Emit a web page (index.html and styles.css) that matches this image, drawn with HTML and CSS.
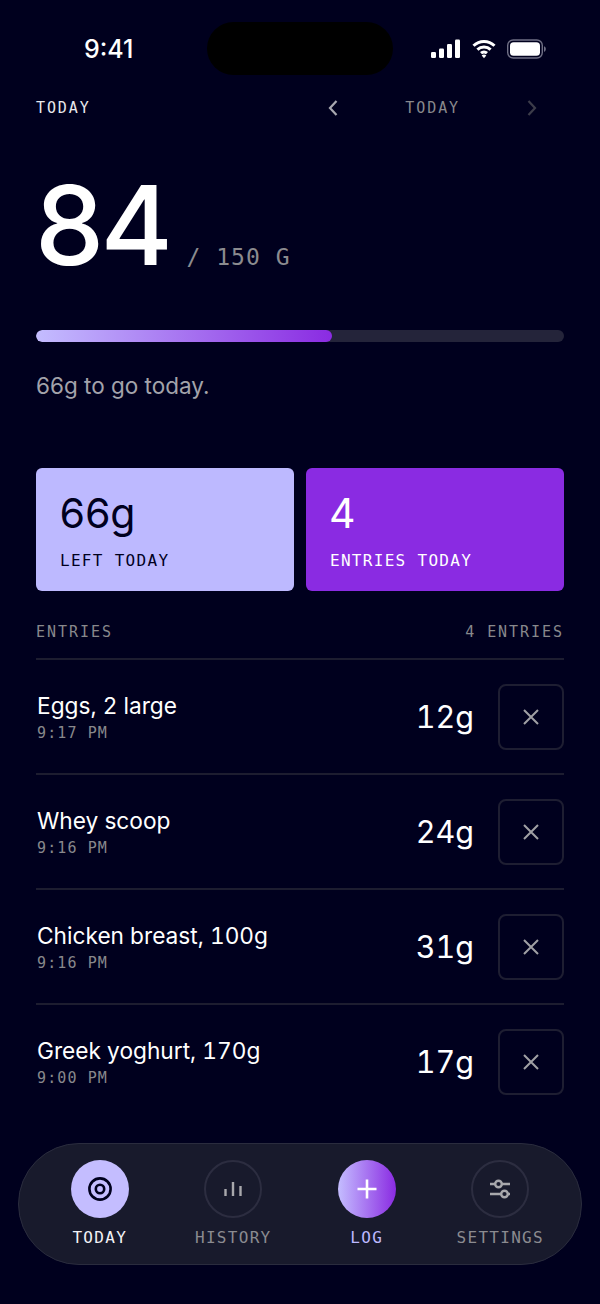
FILE: index.html
```html
<!DOCTYPE html>
<html lang="en">
<head>
<meta charset="utf-8">
<title>Today</title>
<link rel="stylesheet" href="styles.css">
</head>
<body>
<div class="screen">
  <div class="status">
    <span class="clock">9:41</span>
    <div class="island"></div>
    <div class="status-icons">
      <svg class="sig" width="30" height="20" viewBox="0 0 30 20"><rect x="0" y="13" width="5" height="6" rx="1.2"/><rect x="8" y="9.5" width="5" height="9.5" rx="1.2"/><rect x="16" y="5" width="5" height="14" rx="1.2"/><rect x="24" y="0.5" width="5" height="18.5" rx="1.2"/></svg>
      <svg class="wifi" width="26" height="20" viewBox="0 0 24 20"><path d="M1.5 6.8a15 15 0 0 1 21 0" /><path d="M5.4 10.7a9.5 9.5 0 0 1 13.2 0"/><path d="M9 14.2a4.5 4.5 0 0 1 6 0"/><path class="wifi-dot" d="M12 19.2l-2.3-2.6a3.4 3.4 0 0 1 4.6 0z"/></svg>
      <svg class="batt" width="40" height="20" viewBox="0 0 40 20"><rect x="0.7" y="1" width="34.6" height="18" rx="5.5" class="batt-shell"/><rect x="3" y="3.2" width="30" height="13.6" rx="3.6" class="batt-fill"/><path d="M37 7.2c1.2.4 1.8 1.4 1.8 2.8s-.6 2.4-1.8 2.8z" class="batt-cap"/></svg>
    </div>
  </div>

  <header class="topbar">
    <span class="mono top-title">TODAY</span>
    <div class="date-nav">
      <svg class="chev" width="12" height="18" viewBox="0 0 12 18"><path d="M9.5 2L3 9l6.5 7"/></svg>
      <span class="mono date-label">TODAY</span>
      <svg class="chev chev-off" width="12" height="18" viewBox="0 0 12 18"><path d="M2.5 2L9 9l-6.5 7"/></svg>
    </div>
  </header>

  <section class="total">
    <span class="big">84</span>
    <span class="mono goal">/ 150 G</span>
  </section>

  <div class="track"><div class="fill" style="width:56%"></div></div>
  <p class="togo">66g to go today.</p>

  <div class="cards">
    <div class="card card-light">
      <div class="card-num">66g</div>
      <div class="mono card-label">LEFT TODAY</div>
    </div>
    <div class="card card-purple">
      <div class="card-num">4</div>
      <div class="mono card-label">ENTRIES TODAY</div>
    </div>
  </div>

  <div class="mono list-head"><span>ENTRIES</span><span>4 ENTRIES</span></div>

  <ul class="entries">
    <li class="entry">
      <div class="entry-main"><div class="entry-name">Eggs, 2 large</div><div class="mono entry-time">9:17 PM</div></div>
      <div class="entry-g">12g</div>
      <button class="del"><svg width="18" height="18" viewBox="0 0 18 18"><path d="M2 2l14 14M16 2L2 16"/></svg></button>
    </li>
    <li class="entry">
      <div class="entry-main"><div class="entry-name">Whey scoop</div><div class="mono entry-time">9:16 PM</div></div>
      <div class="entry-g">24g</div>
      <button class="del"><svg width="18" height="18" viewBox="0 0 18 18"><path d="M2 2l14 14M16 2L2 16"/></svg></button>
    </li>
    <li class="entry">
      <div class="entry-main"><div class="entry-name">Chicken breast, 100g</div><div class="mono entry-time">9:16 PM</div></div>
      <div class="entry-g">31g</div>
      <button class="del"><svg width="18" height="18" viewBox="0 0 18 18"><path d="M2 2l14 14M16 2L2 16"/></svg></button>
    </li>
    <li class="entry">
      <div class="entry-main"><div class="entry-name">Greek yoghurt, 170g</div><div class="mono entry-time">9:00 PM</div></div>
      <div class="entry-g">17g</div>
      <button class="del"><svg width="18" height="18" viewBox="0 0 18 18"><path d="M2 2l14 14M16 2L2 16"/></svg></button>
    </li>
  </ul>

  <nav class="tabs">
    <div class="tab tab-active">
      <div class="tab-ic"><svg width="26" height="26" viewBox="0 0 26 26"><circle cx="13" cy="13" r="10.6"/><circle cx="13" cy="13" r="4.2"/></svg></div>
      <span class="mono">TODAY</span>
    </div>
    <div class="tab">
      <div class="tab-ic"><svg width="20" height="20" viewBox="0 0 20 20"><path d="M2.5 17V10M10 17V3M17.5 17V7"/></svg></div>
      <span class="mono">HISTORY</span>
    </div>
    <div class="tab tab-log">
      <div class="tab-ic"><svg width="22" height="22" viewBox="0 0 22 22"><path d="M11 1.5v19M1.5 11h19"/></svg></div>
      <span class="mono">LOG</span>
    </div>
    <div class="tab">
      <div class="tab-ic"><svg width="24" height="24" viewBox="0 0 24 24"><path d="M2 7h5M14 7h8M2 17h11M20 17h2"/><circle cx="10.5" cy="7" r="3.3"/><circle cx="16.5" cy="17" r="3.3"/></svg></div>
      <span class="mono">SETTINGS</span>
    </div>
  </nav>
</div>
</body>
</html>
```

FILE: styles.css
```css
* { box-sizing: border-box; }

html, body {
  margin: 0;
  padding: 0;
  background: #00001e;
}

body {
  font-family: Inter, "Liberation Sans", sans-serif;
  color: #fff;
}

.screen {
  width: 600px;
  height: 1304px;
  padding: 0 36px;
  display: flex;
  flex-direction: column;
  position: relative;
  overflow: hidden;
  background: #00001e;
}

.mono {
  font-family: "DejaVu Sans Mono", "Liberation Mono", monospace;
}

/* Status bar */
.status {
  height: 94px;
  flex: none;
  display: flex;
  justify-content: space-between;
  align-items: flex-start;
  padding-top: 34px;
}

.clock {
  margin-left: 48px;
  font-size: 25px;
  line-height: 30px;
  font-weight: 500;
}

.island {
  position: absolute;
  left: 207px;
  top: 22px;
  width: 186px;
  height: 53px;
  border-radius: 27px;
  background: #000;
}

.status-icons {
  display: flex;
  align-items: center;
  gap: 10px;
  margin-right: 17px;
  margin-top: 5px;
}

.sig { margin-left: -1px; }
.sig rect { fill: #fff; }
.wifi path { fill: none; stroke: #fff; stroke-width: 3; }
.wifi .wifi-dot { fill: #fff; stroke: none; }
.batt-shell { fill: none; stroke: #6f6f85; stroke-width: 1.4; }
.batt-fill { fill: #fff; }
.batt-cap { fill: #6f6f85; }

/* Top bar */
.topbar {
  height: 28px;
  flex: none;
  display: flex;
  justify-content: space-between;
  align-items: center;
}

.top-title {
  font-size: 15px;
  letter-spacing: 1.9px;
  color: #e8e8ec;
}

.date-nav {
  display: flex;
  align-items: center;
  gap: 66px;
  margin-right: 26px;
}

.date-label {
  font-size: 15px;
  letter-spacing: 1.9px;
  color: #88888c;
}

.chev { display: block; }
.chev path { fill: none; stroke: #a8a8b0; stroke-width: 2.2; }
.chev-off path { stroke: #3c3c4a; }

/* Daily total */
.total {
  display: flex;
  align-items: baseline;
  gap: 18px;
  height: 208px;
  flex: none;
  padding-top: 31px;
}

.big {
  margin-left: -2px;
  font-size: 110px;
  line-height: 144px;
  font-weight: 500;
  letter-spacing: -4px;
  font-variant-numeric: tabular-nums;
}

.goal {
  font-size: 23px;
  letter-spacing: 1px;
  color: #8b8b8f;
}

.track {
  height: 12px;
  flex: none;
  border-radius: 6px;
  background: #24243a;
  overflow: hidden;
}

.fill {
  height: 100%;
  border-radius: 6px;
  background: linear-gradient(90deg, #c4bdff, #8a2be2);
}

.togo {
  margin: 30px 0 0;
  font-size: 22.5px;
  line-height: 28px;
  color: #a3a3ab;
}

/* Summary cards */
.cards {
  margin-top: 68px;
  display: grid;
  grid-template-columns: 1fr 1fr;
  gap: 12px;
  flex: none;
}

.card {
  height: 123px;
  border-radius: 6px;
  padding: 20px 24px 0;
}

.card-light { background: #bdb9ff; color: #00001e; }
.card-purple { background: #8a2be2; color: #fff; }

.card-num {
  margin-left: -1px;
  font-size: 41px;
  line-height: 50px;
  letter-spacing: -1px;
  font-variant-numeric: tabular-nums;
}

.card-label {
  margin-top: 12px;
  font-size: 16px;
  line-height: 22px;
  letter-spacing: 1.3px;
}

/* Entry list */
.list-head {
  margin-top: 30px;
  height: 39px;
  flex: none;
  display: flex;
  justify-content: space-between;
  font-size: 15px;
  line-height: 22px;
  letter-spacing: 1.95px;
  color: #88888c;
  border-bottom: 2px solid #1d1d30;
}

.entries {
  list-style: none;
  margin: 0;
  padding: 0;
  flex: 1;
}

.entry {
  height: 115px;
  display: flex;
  align-items: center;
  border-bottom: 2px solid #1d1d30;
}

.entry:last-child { border-bottom-color: transparent; }

.entry-main { flex: 1; min-width: 0; padding-left: 1px; padding-top: 2px; }

.entry-name {
  font-size: 22.7px;
  line-height: 28px;
  font-variant-numeric: tabular-nums;
}

.entry-time {
  margin-top: 3px;
  font-size: 15px;
  line-height: 20px;
  letter-spacing: 1.1px;
  color: #88888c;
}

.entry-g {
  font-size: 30.5px;
  font-variant-numeric: tabular-nums;
  margin-right: 24px;
}

.del {
  width: 66px;
  height: 66px;
  flex: none;
  padding: 0;
  display: flex;
  align-items: center;
  justify-content: center;
  background: transparent;
  border: 2px solid #1e1e32;
  border-radius: 8px;
}

.del path { fill: none; stroke: #a0a0a4; stroke-width: 2; }

/* Bottom tab bar */
.tabs {
  flex: none;
  margin: 0 -18px 39px;
  height: 122px;
  border-radius: 61px;
  background: #181a2c;
  border: 1px solid #2a2c3e;
  display: grid;
  grid-template-columns: repeat(4, 133.5px);
  justify-content: center;
  padding-top: 16px;
}

.tab {
  display: flex;
  flex-direction: column;
  align-items: center;
  gap: 9px;
  font-size: 16px;
  line-height: 22px;
  letter-spacing: 1.3px;
  color: #8b8b90;
}

.tab-ic {
  width: 58px;
  height: 58px;
  border-radius: 50%;
  border: 2px solid #2c2d40;
  display: flex;
  align-items: center;
  justify-content: center;
}

.tab-ic svg * { fill: none; stroke: #a8a8ac; stroke-width: 2.4; }

.tab-active { color: #f2f2f6; }
.tab-active .tab-ic { background: #c4bdff; border: 0; }
.tab-active .tab-ic svg * { stroke: #00001e; stroke-width: 2.6; }

.tab-log { color: #bdb9ff; }
.tab-log .tab-ic { background: linear-gradient(90deg, #c4bdff, #8a2be2); border: 0; }
.tab-log .tab-ic svg * { stroke: #fff; stroke-width: 2.6; }
```
